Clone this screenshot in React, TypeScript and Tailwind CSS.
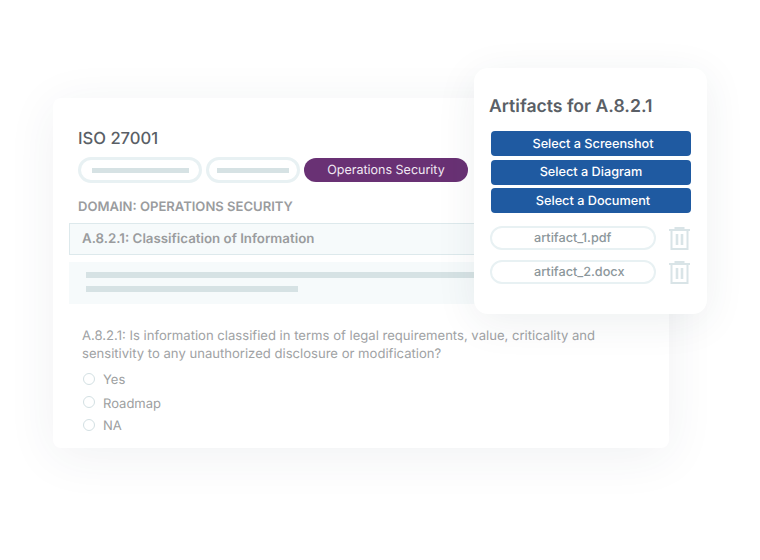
const font = "font-['Inter',sans-serif] [text-rendering:geometricPrecision]";

function Pill({ width, bar }: { width: string; bar: string }) {
  return (
    <div className={`${width} flex h-[26px] items-center justify-center rounded-full border-[3px] border-[#e8f1f3] bg-white`}>
      <div className={`${bar} h-[5px] bg-[#d6e2e4]`} />
    </div>
  );
}

function Radio({ label, textClass }: { label: string; textClass: string }) {
  return (
    <div className="flex items-center gap-[8px]">
      <span className="size-[12px] rounded-full border border-[#d3e0e3] bg-white" />
      <span className={`text-[13px] leading-[18px] text-[#9d9fa1] ${textClass}`}>{label}</span>
    </div>
  );
}

function ArtifactButton({ label, className = '' }: { label: string; className?: string }) {
  return (
    <div className={`flex h-[25px] w-[200px] items-center justify-center rounded-[4px] bg-[#1f5aa1] pt-[2px] text-[12.7px] font-medium text-white ${className}`}>
      {label}
    </div>
  );
}

function TrashIcon() {
  return (
    <svg width="21" height="23" viewBox="0 0 21 23" fill="none" stroke="#d9e4e7" strokeWidth="2">
      <path d="M0 3h21" />
      <path d="M6.5 3V1h8v2" />
      <path d="M2.5 3v19h16V3" />
      <path d="M8 7v11M13 7v11" strokeWidth="2.6" />
    </svg>
  );
}

function ArtifactFile({ name }: { name: string }) {
  return (
    <div className="flex items-center gap-[13px]">
      <div className="flex h-[24px] w-[166px] items-center rounded-full border-[2px] border-[#e8f1f3] bg-white pt-[2px] pl-[42px] text-[12.7px] font-medium text-[#8c979b]">
        {name}
      </div>
      <TrashIcon />
    </div>
  );
}

export default function App() {
  return (
    <div className={`${font} relative h-[560px] w-[760px] overflow-hidden bg-white`}>
      <div className="pt-[98px] pl-[53px]">
        <div className="h-[350px] w-[616px] rounded-[8px] bg-white pt-[30px] shadow-[0_8px_50px_rgba(40,60,80,0.07)]">
          <h1 className="pl-[25px] text-[16.6px] leading-[22px] font-medium text-[#5a5f66]">ISO 27001</h1>

          <div className="mt-[7px] flex items-center gap-[4px] pl-[25px]">
            <Pill width="w-[124px]" bar="w-[97px]" />
            <Pill width="w-[94px]" bar="w-[72px]" />
            <div className="flex h-[24px] w-[164px] items-center justify-center rounded-full bg-[#693174] pt-[2px] text-[12.5px] text-[#f1e9f3]">
              Operations Security
            </div>
          </div>

          <p className="mt-[15px] pl-[25px] text-[13.05px] leading-[18px] font-semibold text-[#9a9c9e]">
            DOMAIN: OPERATIONS SECURITY
          </p>

          <div className="mt-[7px] ml-[16px] flex h-[32px] items-center border-[1px] border-[#dde9ec] bg-[#f6fafb] pt-[2px] pl-[12px]">
            <span className="text-[13.3px] font-semibold text-[#9a9c9e]">A.8.2.1: Classification of Information</span>
          </div>

          <div className="mt-[7px] ml-[16px] h-[42px] bg-[#f6fafb] pt-[10px] pl-[17px]">
            <div className="h-[6px] w-[500px] bg-[#d6e2e4]" />
            <div className="mt-[8px] h-[6px] w-[212px] bg-[#d6e2e4]" />
          </div>

          <p className="mt-[23px] ml-[29px] w-[560px] text-[13.08px] leading-[18px] text-[#a0a2a4]">
            A.8.2.1: Is information classified in terms of legal requirements, value, criticality and sensitivity to any unauthorized disclosure or modification?
          </p>

          <div className="mt-[7px] ml-[30px] flex flex-col gap-[5px]">
            <Radio label="Yes" textClass="translate-y-[1px]" />
            <Radio label="Roadmap" textClass="translate-y-[2px]" />
            <Radio label="NA" textClass="translate-y-[1px]" />
          </div>
        </div>
      </div>

      <div className="absolute top-[68px] left-[474px] h-[246px] w-[233px] rounded-[14px] bg-white pt-[28px] pl-[15px] shadow-[0_8px_40px_rgba(40,60,80,0.08)]">
        <h2 className="text-[17.6px] leading-[22px] font-semibold text-[#5a5f66]">Artifacts for A.8.2.1</h2>
        <div className="mt-[13px] ml-[2px] flex flex-col gap-[3.5px]">
          <ArtifactButton label="Select a Screenshot" className="pl-[4px]" />
          <ArtifactButton label="Select a Diagram" />
          <ArtifactButton label="Select a Document" className="pl-[4px]" />
        </div>
        <div className="mt-[13px] ml-[1px] flex flex-col gap-[10px]">
          <ArtifactFile name="artifact_1.pdf" />
          <ArtifactFile name="artifact_2.docx" />
        </div>
      </div>
    </div>
  );
}
